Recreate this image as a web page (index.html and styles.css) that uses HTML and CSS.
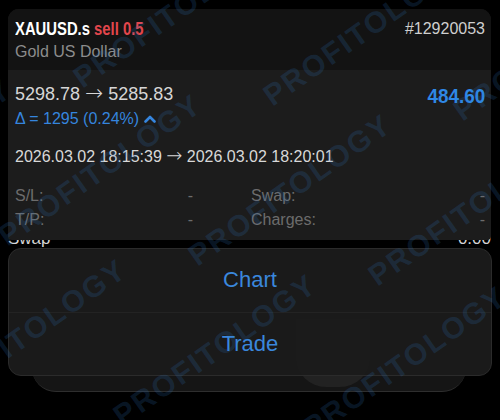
FILE: index.html
```html
<!DOCTYPE html>
<html>
<head>
<meta charset="utf-8">
<link rel="stylesheet" href="styles.css">
</head>
<body>
<div class="screen">
  <div class="app">
    <div class="app-spacer"></div>
    <div class="app-row"><span>Swap</span><span>0.00</span></div>
    <div class="tabbar">
      <div class="tab-pill"></div>
    </div>
  </div>

  <div class="overlay">
    <div class="card">
      <div class="card-head">
        <div class="head-left">
          <div class="title"><span class="sym">XAUUSD.s</span> <span class="side">sell 0.5</span></div>
          <div class="desc">Gold US Dollar</div>
        </div>
        <div class="ticket">#12920053</div>
      </div>
      <div class="card-body">
        <div class="price-row">
          <div class="prices">5298.78 <span class="arrow">→</span> 5285.83</div>
          <div class="profit">484.60</div>
        </div>
        <div class="delta">Δ = 1295 (0.24%)
          <svg class="chev" width="12" height="9" viewBox="0 0 12 9"><path d="M1.5 7.5 L6 3 L10.5 7.5" fill="none" stroke="#3585de" stroke-width="2.6" stroke-linecap="round" stroke-linejoin="round"/></svg>
        </div>
        <div class="dates">2026.03.02 18:15:39 <span class="arrow">→</span> 2026.03.02 18:20:01</div>
        <div class="stats">
          <div class="stat"><span>S/L:</span><span>-</span></div>
          <div class="stat"><span>Swap:</span><span>-</span></div>
          <div class="stat"><span>T/P:</span><span>-</span></div>
          <div class="stat"><span>Charges:</span><span>-</span></div>
        </div>
      </div>
    </div>

    <div class="menu">
      <div class="menu-item">Chart</div>
      <div class="menu-item">Trade</div>
    </div>
  </div>

  <div class="watermark">
    <span class="wm w1">PROFITOLOGY</span>
    <span class="wm w2">PROFITOLOGY</span>
    <span class="wm w3">PROFITOLOGY</span>
    <span class="wm w4">PROFITOLOGY</span>
    <span class="wm w5">PROFITOLOGY</span>
    <span class="wm w6">PROFITOLOGY</span>
    <span class="wm w7">PROFITOLOGY</span>
    <span class="wm w8">PROFITOLOGY</span>
    <span class="wm w9">PROFITOLOGY</span>
    <span class="wm w10">PROFITOLOGY</span>
  </div>
</div>
</body>
</html>
```
FILE: styles.css
```css
* { box-sizing: border-box; }
html, body {
  margin: 0;
  padding: 0;
  background: #000;
}
body {
  font-family: "Liberation Sans", Arial, sans-serif;
  color: #ddd;
}
.screen {
  position: relative;
  width: 500px;
  height: 420px;
  overflow: hidden;
  background: #000;
}

/* background app (behind the context menu) */
.app {
  display: flex;
  flex-direction: column;
}
.app-spacer { height: 229px; }
.app-row {
  display: flex;
  justify-content: space-between;
  padding: 0 9px 0 8px;
  font-size: 17px;
  line-height: 20px;
  color: #d4d4d4;
}
.tabbar {
  margin: 70px 34px 0 32px;
  height: 73px;
  background: #151515;
  border-radius: 0 0 24px 24px;
  border-bottom: 1px solid #2e2e2e;
  display: flex;
  justify-content: flex-end;
  padding-right: 96px;
}
.tab-pill {
  width: 74px;
  height: 68px;
  background: #222;
  border-radius: 0 0 30px 30px;
}

/* overlay */
.overlay {
  position: absolute;
  inset: 0;
  padding: 9px 8px 0 8px;
  display: flex;
  flex-direction: column;
}
.card {
  height: 231px;
  margin-right: 1px;
  border-radius: 11px 11px 4px 4px;
  overflow: hidden;
  display: flex;
  flex-direction: column;
  background: #1c1c1c;
}
.card-head {
  height: 61px;
  background: #131313;
  display: flex;
  justify-content: space-between;
  padding: 8px 6px 0 7px;
}
.title {
  font-weight: bold;
  font-size: 19px;
  line-height: 24px;
  white-space: nowrap;
  transform: scaleX(0.78);
  transform-origin: left center;
}
.sym { color: #fff; }
.side { color: #e2464c; }
.desc {
  font-size: 16px;
  line-height: 20px;
  color: #8c8c8c;
  margin-top: 1px;
}
.ticket {
  font-size: 16px;
  line-height: 22px;
  color: #cfcfcf;
  margin-top: 1px;
}
.card-body {
  flex: 1;
  padding: 12px 6px 0 7px;
}
.price-row {
  display: flex;
  justify-content: space-between;
  align-items: flex-start;
}
.prices {
  font-size: 18px;
  line-height: 22px;
  color: #d6d6d6;
}
.arrow {
  font-family: "DejaVu Sans", sans-serif;
  font-weight: 200;
  font-size: 1.2em;
  line-height: 1;
}
.profit {
  font-weight: bold;
  font-size: 21px;
  line-height: 26px;
  color: #2f88e6;
  margin-top: 1px;
  transform: scaleX(0.9);
  transform-origin: right center;
}
.delta {
  font-size: 16px;
  line-height: 20px;
  color: #3585de;
  display: flex;
  align-items: center;
  gap: 5px;
}
.chev { margin-top: -1px; }
.dates {
  font-size: 16px;
  line-height: 20px;
  color: #d8d8d8;
  margin-top: 17px;
}
.stats {
  display: grid;
  grid-template-columns: 178px 1fr;
  column-gap: 58px;
  row-gap: 5px;
  margin-top: 19px;
  font-size: 16px;
  line-height: 19px;
  color: #6c6c6c;
}
.stat {
  display: flex;
  justify-content: space-between;
}

.menu {
  margin-top: 8px;
  height: 128px;
  border-radius: 13px;
  background: rgba(27, 27, 27, 0.97);
  border: 1px solid #2b2b2b;
  display: flex;
  flex-direction: column;
}
.menu-item {
  flex: 1;
  display: flex;
  align-items: center;
  justify-content: center;
  font-size: 22px;
  color: #3a87dc;
}
.menu-item + .menu-item {
  border-top: 1px solid #232323;
}

/* watermark */
.watermark {
  position: absolute;
  inset: 0;
  pointer-events: none;
  overflow: hidden;
}
.wm {
  position: absolute;
  transform: translate(-50%, -50%) rotate(-35deg);
  font-family: "Liberation Sans", Arial, sans-serif;
  font-weight: bold;
  font-size: 30px;
  letter-spacing: 2px;
  white-space: nowrap;
  color: rgba(45, 115, 190, 0.2);
}
.w1 { left: 100px; top: 170px; }
.w2 { left: 290px; top: 190px; }
.w3 { left: 470px; top: 210px; }
.w4 { left: 25px; top: 335px; }
.w5 { left: 215px; top: 350px; }
.w6 { left: 405px; top: 362px; }
.w7 { left: 175px; top: 12px; }
.w8 { left: 365px; top: 30px; }
.w9 { left: -90px; top: 155px; }
.w10 { left: 555px; top: 45px; }
```
